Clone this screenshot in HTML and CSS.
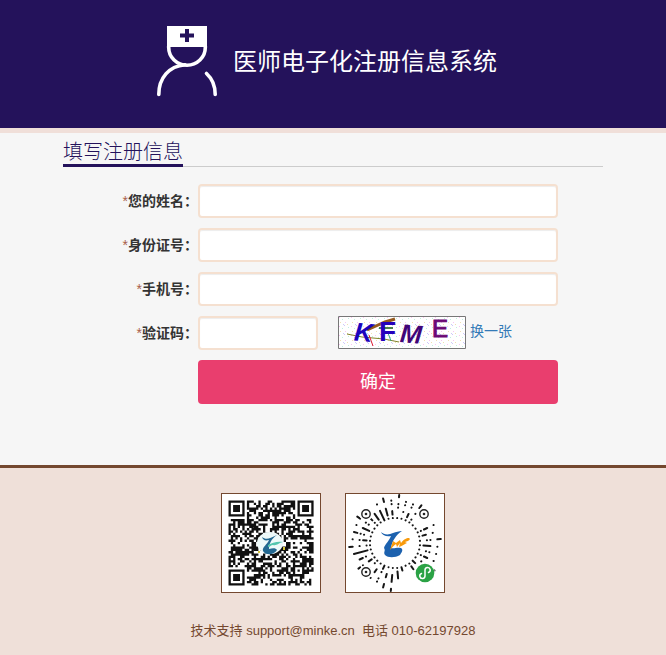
FILE: index.html
```html
<!DOCTYPE html>
<html lang="zh-CN">
<head>
  <meta charset="UTF-8" />
  <meta name="viewport" content="width=device-width, initial-scale=1.0" />
  <title>医师电子化注册信息系统</title>
  <link rel="stylesheet" href="styles.css">
</head>
<body>
<header class="header">
  <svg class="logo" viewBox="0 0 60 72" aria-hidden="true">
    <path d="M10 0h40v21H10z" fill="#fff"/>
    <path d="M28 3h4v4.500h5v4h-5V16h-4v-4.500h-5v-4h5z" fill="#24125b"/>
    <path d="M11.700 20v1.500a18.300 17.700 0 0 0 36.600 0V20" fill="none" stroke="#fff" stroke-width="3.600"/>
    <path d="M1.800 68.500C1.800 52 12 40 28 38.700M49.500 47.500C55.500 53 58.200 60 58.200 68.500" fill="none" stroke="#fff" stroke-width="3.600" stroke-linecap="round"/>
  </svg>
  <h1>医师电子化注册信息系统</h1>
</header>

<main class="main">
  <h2 class="section-title"><span>填写注册信息</span></h2>
  <form class="form">
    <label for="name"><i>*</i>您的姓名：</label>
    <input class="field" id="name" type="text">

    <label for="idcard"><i>*</i>身份证号：</label>
    <input class="field" id="idcard" type="text">

    <label for="phone"><i>*</i>手机号：</label>
    <input class="field" id="phone" type="tel">

    <label for="code"><i>*</i>验证码：</label>
    <div class="code-row">
      <input class="field" id="code" type="text">
      <svg class="captcha" viewBox="0 0 128 33" role="img" aria-label="验证码">
        <defs>
          <pattern id="specks" width="12" height="9" patternUnits="userSpaceOnUse">
            <path d="M1 1h1v1H1zM7 6h1v1H7z" fill="#f9c4f4"/>
            <path d="M4 3h1v1H4zM10 2h1v1h-1z" fill="#bfeee0"/>
            <path d="M2 6h1v1H2zM9 8h1v1H9z" fill="#efdfb0"/>
            <path d="M6 0h1v1H6zM5 8h1v1H5z" fill="#ccc9fa"/>
          </pattern>
        </defs>
        <path d="M0 0h128v33H0z" fill="#fff"/>
        <path d="M0 0h128v33H0z" fill="url(#specks)"/>
        <path d="M9 18l15 3 22 2 15 3" fill="none" stroke="#83852a"/>
        <path d="M29 14l18-8 10-3" fill="none" stroke="#95591f" stroke-width="3"/>
        <path d="M41 12h14" stroke="#4c8050" stroke-width="2"/>
        <path d="M31 19l4 11" stroke="#e01a35"/>
        <path d="M50 17l3 8" stroke="#31a887"/>
        <text x="16" y="25" font-size="26" font-style="italic" fill="#1c04bd" transform="rotate(5 20 18)">K</text>
        <text x="41" y="25" font-size="28" fill="#2501bb">F</text>
        <text x="62" y="27" font-size="26" font-style="italic" fill="#410578" transform="rotate(5 74 20)">M</text>
        <text class="thin" x="94" y="21" font-size="24" fill="#6b0875">E</text>
        <path d="M.5.5h127v32H.5z" fill="none" stroke="#777"/>
      </svg>
      <a class="refresh" href="#">换一张</a>
    </div>

    <button class="submit" type="submit">确定</button>
  </form>
</main>

<footer class="footer">
  <div class="codes">
    <svg class="qr" viewBox="0 0 98 98" role="img" aria-label="二维码">
      <path id="modules" fill="#111"/>
      <ellipse cx="48" cy="49" rx="13" ry="11" fill="#edf9f9"/>
      <path d="M40 43c4 3 7 2 15-2-6 4-8 9-8 14 4-1 7-1 8 1-4 6-12 5-14 1-1-4 4-6 6-11-4 1-6 0-7-3z" fill="#236891"/>
      <path d="M46 51c4-2 9-4 15-3-5 1-6 4-10 3-2 0-3 2-5 2z" fill="#52c5ae"/>
      <path d="M61 53h2v3h-2zM36 57h2v2h-2z" fill="#d9c93d"/>
    </svg>
    <svg class="qr" viewBox="0 0 98 98" role="img" aria-label="小程序码">
      <path id="rays" fill="none" stroke="#161616" stroke-width="2" stroke-linecap="round"/>
      <g fill="none" stroke="#222" stroke-width="1.400">
        <circle cx="20" cy="20" r="6" fill="#fff" stroke="#fff"/>
        <circle cx="78" cy="20" r="6" fill="#fff" stroke="#fff"/>
        <circle cx="20" cy="78" r="6" fill="#fff" stroke="#fff"/>
        <circle cx="20" cy="20" r="4.200"/>
        <circle cx="78" cy="20" r="4.200"/>
        <circle cx="20" cy="78" r="4.200"/>
      </g>
      <g fill="#222">
        <circle cx="20" cy="20" r="1.300"/>
        <circle cx="78" cy="20" r="1.300"/>
        <circle cx="20" cy="78" r="1.300"/>
      </g>
      <path d="M35 38c3 3 8 3 12 1 3-1 6-2 9-2-6 4-10 10-11 17 3 1 6-1 10 0 3 2 0 5-1 7-5 3-12 3-15 0-2-3 1-4-1-7 1-4 5-7 7-12-5 1-9-1-10-4z" fill="#1c61ae"/>
      <path d="M44 56l3-9 3 2 4-3 1 3c4-5 6-5 9-5l-1 1h1c-1 2-3 2-5 3l2 1c-3 1-4 3-8 4l1-4-3 4-1-3c-3 2-4 4-6 6z" fill="#f89a0b"/>
      <circle cx="79" cy="79" r="10" fill="#fff"/>
      <circle cx="79" cy="79" r="9.300" fill="#2ba245"/>
      <path d="M75.500 79.500a2.600 2.600 0 1 0 3.500 2.500v-6a2.600 2.600 0 1 1 3.500 2.500" fill="none" stroke="#fff" stroke-width="1.500" stroke-linecap="round"/>
    </svg>
  </div>
  <p>技术支持 support@minke.cn&nbsp; 电话 010-62197928</p>
</footer>
<script src="codes.js"></script>
</body>
</html>
```
FILE: styles.css
```css
* {
  box-sizing: border-box;
}

body {
  margin: 0;
  min-height: 100vh;
  display: flex;
  flex-direction: column;
  background: #f6f6f6;
  color: #333;
  font-family: "Liberation Sans", Arial, "Noto Sans CJK SC", sans-serif;
  font-size: 14px;
  line-height: 20px;
}

.header {
  display: flex;
  justify-content: center;
  align-items: center;
  gap: 16px;
  padding: 26px 12px 30px;
  background: #24125b;
  border-bottom: 5px solid #f0dfd9;
}

.logo {
  width: 60px;
  height: 72px;
}

.header h1 {
  margin: 0;
  padding-right: 12px;
  color: #fff;
  font-size: 24px;
  font-weight: normal;
  line-height: 36px;
}

.main {
  width: 100%;
  max-width: 540px;
  margin: 0 auto;
  padding: 8px 0 61px;
}

.section-title {
  display: flex;
  margin: 0 0 17px;
  border-bottom: 1px solid #ccc;
  color: #24125b;
  font-size: 20px;
  font-weight: 300;
  line-height: 23px;
}

.section-title span {
  margin-bottom: -1px;
  border-bottom: 3px solid #24125b;
}

.form {
  display: grid;
  grid-template-columns: 135px minmax(0, 360px);
  row-gap: 10px;
}

.form label {
  padding-top: 7px;
  text-align: right;
  font-weight: bold;
}

.form label i {
  color: #a9604b;
  font-style: normal;
  font-weight: normal;
}

.field {
  width: 100%;
  height: 34px;
  padding: 6px 12px;
  border: 2px solid #f5e0d0;
  border-radius: 4px;
  background: #fff;
  box-shadow: inset 0 1px 1px rgba(0, 0, 0, 0.075);
  color: #555;
  font: inherit;
}

.code-row {
  display: flex;
}

.code-row .field {
  width: 120px;
  margin-right: 20px;
}

.captcha {
  flex: none;
  width: 128px;
  height: 33px;
  margin-right: 4px;
  overflow: visible;
  font-family: "Liberation Sans", Arial, sans-serif;
  font-weight: bold;
}

.captcha .thin {
  font-weight: normal;
  stroke: #6b0875;
}

.refresh {
  padding-top: 5px;
  color: #337ab7;
  text-decoration: none;
}

.submit {
  grid-column: 2;
  height: 44px;
  padding: 0;
  border: 0;
  border-radius: 4px;
  background: #e93e6e;
  color: #fff;
  font-family: inherit;
  font-size: 18px;
  line-height: 44px;
}

.footer {
  flex: 1;
  padding: 25px 12px 14px;
  background: #efe0d9;
  border-top: 3px solid #74482f;
  color: #74482f;
  text-align: center;
}

.codes {
  display: flex;
  justify-content: center;
  gap: 24px;
}

.qr {
  width: 100px;
  height: 100px;
  border: 1px solid #74482f;
  background: #fff;
}

.footer p {
  margin: 28px 0 0;
  font-size: 13px;
}
```
FILE: codes.js
```js
// square code: 37 modules a side, finder squares in three corners
const SIZE = 37;
const STEP = 2.3;
let seed = 71;

function noise() {
  seed = (seed * 16807) % 2147483647;
  return seed / 2147483647;
}

function ring(x, y, cx, cy) {
  return Math.max(Math.abs(x - cx), Math.abs(y - cy));
}

function isDark(x, y) {
  const random = noise() < 0.56;
  for (const [cx, cy] of [[3, 3], [33, 3], [3, 33]]) {
    const d = ring(x, y, cx, cy);
    if (d <= 4) return d < 2 || d === 3;
  }
  const d = ring(x, y, 30, 30);
  if (d <= 2) return d !== 1;
  return random;
}

let squares = "";
for (let y = 0; y < SIZE; y++) {
  for (let x = 0; x < SIZE; x++) {
    if (isDark(x, y)) {
      squares += `M${6.5 + x * STEP} ${6.5 + y * STEP}h${STEP}v${STEP}h-${STEP}z`;
    }
  }
}
document.getElementById("modules").setAttribute("d", squares);

// round code: one string per ray, clockwise from the top, read outwards
// "." is a dot, a run of "-" is a bar
const rays = [
  ".  .. -", ". . .. ", ".-- .. ", ".. . --", ".  .   ", ".      ",
  "..-- . ", ".-- .  ", ". .. --", ".--- . ", ". .. . ", "..-- . ",
  ". . ..-", "-- . . ", ".-- .  ", ".      ", "--     ", ".---   ",
  ". --- -", ". -- --", "--. .. ", ". -- . ", ".. -- .", ".-- .- ",
  ". .--  ", ".----- ", ".. . --", ".--. . ", ". ..-- ", ".--- . ",
  ". .. --", "..-----", ".---   ", "---- . ", ".--- --", ".-- .. "
];

let lines = "";
rays.forEach((ray, i) => {
  const angle = (5 + i * 10) * Math.PI / 180;
  const point = r => `${49 + Math.sin(angle) * r} ${49 - Math.cos(angle) * r}`;
  for (const run of ray.matchAll(/\.|-+/g)) {
    const start = 25 + run.index * 3.5;
    const end = start + (run[0] === "." ? 0.1 : Math.max(run[0].length - 1, 0.6) * 3.5);
    lines += `M${point(start)}L${point(end)}`;
  }
});
document.getElementById("rays").setAttribute("d", lines);
```
